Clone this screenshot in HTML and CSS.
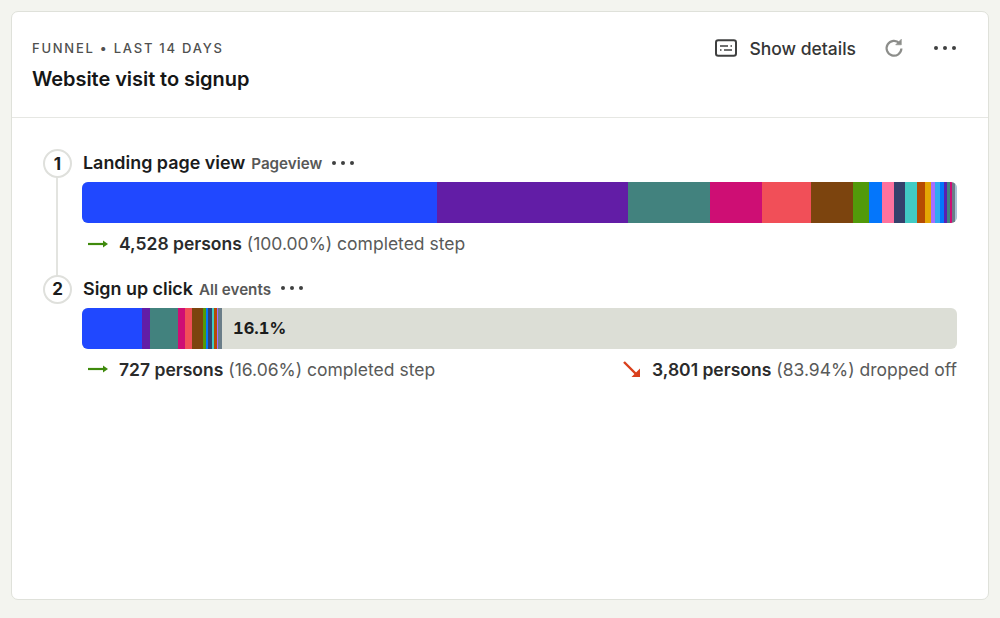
FILE: index.html
```html
<!DOCTYPE html>
<html lang="en">
<head>
<meta charset="utf-8">
<title>Website visit to signup</title>
<link rel="stylesheet" href="styles.css">
</head>
<body>
<main class="card">
  <header class="card-header">
    <div class="heading">
      <div class="eyebrow">Funnel • Last 14 days</div>
      <h1 class="title">Website visit to signup</h1>
    </div>
    <div class="actions">
      <button class="details">
        <svg class="icon-details" width="22" height="18" viewBox="0 0 22 18" fill="none" stroke="#3f4040" stroke-width="2"><rect x="1" y="1.2" width="20" height="15.6" rx="2.2"/><path d="M5 7h8M15.5 7h1.5M5 11h1.5M9 11h8" stroke-width="1.7"/></svg>
        <span>Show details</span>
      </button>
      <svg class="icon-refresh" width="20" height="20" viewBox="0 0 20 20" fill="none" stroke="#8c8d8a" stroke-width="2.2"><path d="M15.4 5.2A7.4 7.4 0 1 0 17.4 10.5"/><path d="M17.3 1.2v5.6h-5.6z" fill="#8c8d8a" stroke-width="0.6"/></svg>
      <span class="dots dots-lg"><i></i><i></i><i></i></span>
    </div>
  </header>

  <section class="funnel">
    <article class="step">
      <div class="step-head">
        <span class="badge">1</span>
        <span class="step-name">Landing page view</span>
        <span class="step-event">Pageview</span>
        <span class="dots"><i></i><i></i><i></i></span>
      </div>
      <div class="bar">
        <span class="c-blue" style="width:355px"></span>
        <span class="c-purple" style="width:191px"></span>
        <span class="c-teal" style="width:82px"></span>
        <span class="c-magenta" style="width:52px"></span>
        <span class="c-coral" style="width:49px"></span>
        <span class="c-brown" style="width:42px"></span>
        <span class="c-green" style="width:16px"></span>
        <span class="c-sky" style="width:13px"></span>
        <span class="c-pink" style="width:12px"></span>
        <span class="c-navy" style="width:11px"></span>
        <span class="c-aqua" style="width:12px"></span>
        <span class="c-orange" style="width:8px"></span>
        <span class="c-yellow" style="width:6px"></span>
        <span class="c-lav" style="width:4px"></span>
        <span class="c-lblue" style="width:5px"></span>
        <span class="c-sky" style="width:4px"></span>
        <span class="c-violet" style="width:3px"></span>
        <span class="c-teal" style="width:3px"></span>
        <span class="c-magenta" style="width:2px"></span>
        <span class="c-grey" style="width:3px"></span>
        <span class="c-pale" style="width:2px"></span>
      </div>
      <div class="stats">
        <div class="stat">
          <svg class="arrow" width="20" height="10" viewBox="0 0 20 10" fill="none" stroke="#3f8a0c" stroke-width="2.2"><path d="M0 5h17"/><path d="M15 1.6 20 5l-5 3.4z" fill="#3f8a0c" stroke="none"/></svg>
          <b>4,528 persons</b> <span class="muted">(100.00%) completed step</span>
        </div>
      </div>
    </article>

    <article class="step">
      <div class="step-head">
        <span class="badge">2</span>
        <span class="step-name">Sign up click</span>
        <span class="step-event">All events</span>
        <span class="dots"><i></i><i></i><i></i></span>
      </div>
      <div class="bar">
        <span class="c-blue" style="width:60px"></span>
        <span class="c-purple" style="width:8px"></span>
        <span class="c-teal" style="width:28px"></span>
        <span class="c-magenta" style="width:7px"></span>
        <span class="c-coral" style="width:7px"></span>
        <span class="c-brown" style="width:11px"></span>
        <span class="c-green" style="width:3px"></span>
        <span class="c-sky" style="width:2px"></span>
        <span class="c-navy" style="width:4px"></span>
        <span class="c-aqua" style="width:2px"></span>
        <span class="c-orange" style="width:3px"></span>
        <span class="c-lav" style="width:1px"></span>
        <span class="c-grey" style="width:4px"></span>
        <span class="bar-label">16.1%</span>
      </div>
      <div class="stats">
        <div class="stat">
          <svg class="arrow" width="20" height="10" viewBox="0 0 20 10" fill="none" stroke="#3f8a0c" stroke-width="2.2"><path d="M0 5h17"/><path d="M15 1.6 20 5l-5 3.4z" fill="#3f8a0c" stroke="none"/></svg>
          <b>727 persons</b> <span class="muted">(16.06%) completed step</span>
        </div>
        <div class="stat">
          <svg class="arrow-down" width="18" height="18" viewBox="0 0 18 18" fill="none" stroke="#d9401c" stroke-width="2.4"><path d="M1 2l12.5 12.5"/><path d="M17 17H8.5L17 8.5z" fill="#d9401c" stroke="none"/></svg>
          <b>3,801 persons</b> <span class="muted">(83.94%) dropped off</span>
        </div>
      </div>
    </article>
  </section>
</main>
</body>
</html>
```
FILE: styles.css
```css
* { box-sizing: border-box; }
html, body { height: 100%; }
body {
  margin: 0;
  padding: 11px 11px 18px;
  background: #f3f4ef;
  font-family: Inter, "Liberation Sans", sans-serif;
  color: #1b1c1c;
}
.card {
  height: 589px;
  background: #fff;
  border: 1px solid #dfe1da;
  border-radius: 7px;
}
.card-header {
  height: 106px;
  padding: 27px 32px 0 20px;
  border-bottom: 1px solid #e6e7e3;
  display: flex;
  justify-content: space-between;
  align-items: flex-start;
}
.eyebrow {
  font-size: 13px;
  line-height: 18px;
  font-weight: 500;
  letter-spacing: 1.75px;
  text-transform: uppercase;
  color: #4f504f;
}
.title {
  margin: 10px 0 0;
  font-size: 20px;
  line-height: 24px;
  font-weight: 600;
  letter-spacing: -0.06px;
  color: #151616;
}
.actions {
  display: flex;
  align-items: center;
  height: 18px;
}
.details {
  display: flex;
  align-items: center;
  gap: 12px;
  padding: 0;
  border: 0;
  background: none;
  font: inherit;
  font-size: 17.5px;
  font-weight: 500;
  color: #353636;
}
.icon-refresh { margin-left: 28px; }
.dots { display: inline-flex; gap: 5px; align-items: center; }
.dots i { width: 4px; height: 4px; border-radius: 50%; background: #3f4040; }
.dots-lg { margin-left: 30px; }
.funnel { padding: 31px 31px 0 70px; }
.step { position: relative; margin-bottom: 16.5px; }
.step:first-child::before {
  content: "";
  position: absolute;
  left: -26px;
  top: 14px;
  width: 2px;
  height: 120px;
  background: #e3e4e0;
}
.step-head {
  position: relative;
  display: flex;
  align-items: center;
  height: 27px;
  padding-left: 1px;
}
.badge {
  position: absolute;
  left: -39px;
  top: 0;
  width: 29px;
  height: 29px;
  display: flex;
  align-items: center;
  justify-content: center;
  border: 2.5px solid #dfe0dc;
  border-radius: 50%;
  background: #fff;
  font-size: 17px;
  font-weight: 700;
  color: #1b1c1c;
}
.step-name { font-size: 17.9px; font-weight: 600; color: #1b1c1c; }
.step-event { margin-left: 6px; font-size: 15.2px; font-weight: 600; color: #575857; position: relative; top: 1px; }
.step-head .dots { margin-left: 10px; }
.bar {
  display: flex;
  height: 41px;
  margin-top: 6px;
  border-radius: 6px;
  overflow: hidden;
  background: #dcded6;
}
.bar span { flex: none; }
.bar .bar-label {
  flex: 1;
  padding-left: 11px;
  font-size: 16.5px;
  font-weight: 700;
  line-height: 41px;
  font-variant-numeric: tabular-nums;
  color: #1b1c1c;
}
.stats {
  display: flex;
  justify-content: space-between;
  height: 28px;
  margin-top: 7px;
  padding-left: 6px;
  font-size: 17.5px;
  line-height: 27px;
}
.stat { display: flex; align-items: center; white-space: pre; height: 27px; }
.stat b { font-weight: 600; color: #2a2b2b; }
.muted { color: #595a59; margin-left: 5px; }
.arrow { margin-right: 11px; }
.arrow-down { margin-right: 11px; }
.c-blue { background: #2048ff; }
.c-purple { background: #621da6; }
.c-teal { background: #42827e; }
.c-magenta { background: #ce0e74; }
.c-coral { background: #f14f58; }
.c-brown { background: #7c440e; }
.c-green { background: #529a0a; }
.c-sky { background: #0476fb; }
.c-pink { background: #fe729e; }
.c-navy { background: #35416b; }
.c-aqua { background: #41cbc4; }
.c-orange { background: #b64b02; }
.c-yellow { background: #e4a604; }
.c-lav { background: #a56eff; }
.c-lblue { background: #30a9f0; }
.c-violet { background: #5a1fb0; }
.c-grey { background: #6a7d88; }
.c-pale { background: #a9c2d6; }
```
